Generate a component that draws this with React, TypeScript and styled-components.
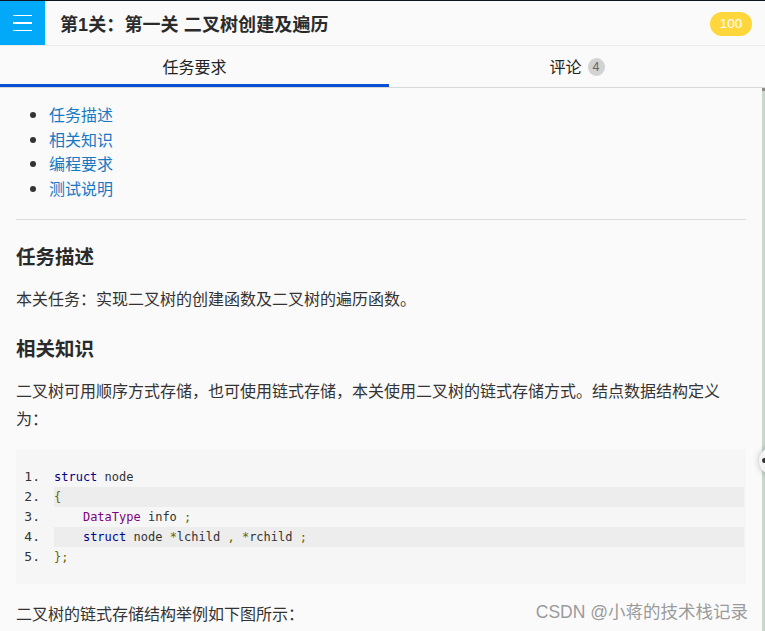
import React from 'react'
import styled, { createGlobalStyle } from 'styled-components'

const GlobalStyle = createGlobalStyle`
  html, body {
    margin: 0;
    padding: 0;
    background: #fafafa;
  }
  body {
    font-family: "Noto Sans CJK SC", "Liberation Sans", sans-serif;
    color: #333;
  }
`

const sans = `"Liberation Sans", "Noto Sans CJK SC", sans-serif`
const mono = `"DejaVu Sans Mono", "Liberation Mono", monospace`

const Page = styled.div`
  position: relative;
  width: 765px;
  height: 631px;
  overflow: hidden;
  border-top: 1px solid #0b1620;
  box-sizing: border-box;
  display: flex;
  flex-direction: column;
`

const Header = styled.header`
  display: flex;
  align-items: center;
  height: 44px;
  border-bottom: 1px solid #ececec;
  background: #fafafa;
  padding-right: 13px;
`

const MenuButton = styled.div`
  width: 45px;
  height: 44px;
  background: #03a9f9;
  display: flex;
  flex-direction: column;
  justify-content: center;
  align-items: center;
  gap: 6px;
  flex-shrink: 0;
`

const MenuLine = styled.span`
  display: block;
  width: 19px;
  height: 1.5px;
  background: #fff;
`

const Title = styled.h1`
  flex: 1;
  margin: 0 0 0 15px;
  font-family: ${sans};
  font-size: 18px;
  font-weight: 700;
  color: #2b2b2b;
  letter-spacing: 0.1px;
`

const Score = styled.span`
  width: 42px;
  height: 24px;
  border-radius: 12px;
  background: #ffd73c;
  color: #fff;
  font-family: ${sans};
  font-size: 13.5px;
  display: flex;
  align-items: center;
  justify-content: center;
  margin-top: 1px;
`

const TabBar = styled.nav`
  display: flex;
  height: 41px;
  border-bottom: 1px solid #d8d8d8;
`

const Tab = styled.div<{ $active?: boolean }>`
  flex: 1;
  display: flex;
  align-items: center;
  justify-content: center;
  gap: 6px;
  font-size: 16px;
  color: #222;
  box-sizing: border-box;
  padding-top: 1px;
  border-bottom: 3px solid ${(p) => (p.$active ? '#0a50d4' : 'transparent')};
  &:last-child {
    flex: 0 0 376px;
  }
`

const CountBadge = styled.span`
  width: 17px;
  height: 18px;
  border-radius: 50%;
  background: #d2d2d2;
  color: #666;
  font-family: ${sans};
  font-size: 12.5px;
  display: flex;
  align-items: center;
  justify-content: center;
  margin-top: 3px;
`

const Body = styled.div`
  flex: 1;
  display: flex;
  min-height: 0;
`

const Article = styled.article`
  flex: 1;
  padding: 14px 16px 0 16px;
  font-size: 16px;
  color: #333;
`

const Edge = styled.div`
  width: 3px;
  background: #c8d8cc;
  border-top: 3px solid #8c8c8c;
`

const Toc = styled.ul`
  margin: 0;
  padding-left: 33px;
  line-height: 24.7px;
  li::marker {
    color: #333;
  }
`

const TocLink = styled.a`
  color: #1878c2;
  text-decoration: none;
`

const Rule = styled.hr`
  border: none;
  border-top: 1px solid #dcdcdc;
  margin: 18px 0 0;
`

const Heading = styled.h3`
  margin: 22px 0 0;
  font-size: 19.5px;
  font-weight: 700;
  line-height: 28px;
  color: #2a2a2a;
`

const Para = styled.p<{ $top?: number }>`
  margin: ${(p) => p.$top ?? 14}px 0 0;
  line-height: 28px;
  color: #333;
`

const CodeBlock = styled.pre`
  margin: 17px 0 0;
  padding: 18px 2px 17px 0;
  background: #f6f6f6;
  font-family: ${mono};
  font-size: 12px;
`

const CodeLine = styled.div`
  display: flex;
  height: 20px;
  line-height: 20px;
`

const LineNo = styled.span`
  width: 38px;
  flex-shrink: 0;
  box-sizing: border-box;
  padding-right: 14px;
  text-align: right;
  color: #333;
  font-size: 13px;
`

const LineCode = styled.code<{ $alt?: boolean }>`
  flex: 1;
  font-family: inherit;
  white-space: pre;
  background: ${(p) => (p.$alt ? '#ededed' : 'transparent')};
`

const Kwd = styled.span`
  color: #000088;
`
const Typ = styled.span`
  color: #7f007f;
`
const Pun = styled.span`
  color: #666600;
`

const Watermark = styled.div`
  position: absolute;
  right: 17px;
  bottom: 8px;
  font-family: ${sans};
  font-size: 17.5px;
  color: #9a9a9a;
  text-shadow: 0 0 1px #fff, 0 0 2px #fff;
`

const Handle = styled.div`
  position: absolute;
  left: 759px;
  top: 446px;
  width: 28px;
  height: 28px;
  border-radius: 50%;
  background: #f4f4f4;
  box-shadow: 0 0 6px rgba(0, 0, 0, 0.25);
  &::after {
    content: '';
    position: absolute;
    left: 3px;
    top: 11px;
    width: 5px;
    height: 5px;
    border-radius: 50%;
    background: #333;
  }
`

const toc = ['任务描述', '相关知识', '编程要求', '测试说明']

const code: React.ReactNode[] = [
  <>
    <Kwd>struct</Kwd> node
  </>,
  <Pun>{'{'}</Pun>,
  <>
    {'    '}
    <Typ>DataType</Typ> info <Pun>;</Pun>
  </>,
  <>
    {'    '}
    <Kwd>struct</Kwd> node <Pun>*</Pun>lchild <Pun>,</Pun> <Pun>*</Pun>rchild <Pun>;</Pun>
  </>,
  <Pun>{'};'}</Pun>,
]

const App = () => {
  return (
    <Page>
      <GlobalStyle />
      <Header>
        <MenuButton>
          <MenuLine />
          <MenuLine />
          <MenuLine />
        </MenuButton>
        <Title>第1关：第一关 二叉树创建及遍历</Title>
        <Score>100</Score>
      </Header>
      <TabBar>
        <Tab $active>任务要求</Tab>
        <Tab>
          评论<CountBadge>4</CountBadge>
        </Tab>
      </TabBar>
      <Body>
        <Article>
          <Toc>
            {toc.map((t) => (
              <li key={t}>
                <TocLink href="#">{t}</TocLink>
              </li>
            ))}
          </Toc>
          <Rule />
          <Heading>任务描述</Heading>
          <Para>本关任务：实现二叉树的创建函数及二叉树的遍历函数。</Para>
          <Heading>相关知识</Heading>
          <Para>
            二叉树可用顺序方式存储，也可使用链式存储，本关使用二叉树的链式存储方式。结点数据结构定义为：
          </Para>
          <CodeBlock>
            {code.map((line, i) => (
              <CodeLine key={i}>
                <LineNo>{i + 1}.</LineNo>
                <LineCode $alt={i % 2 === 1}>{line}</LineCode>
              </CodeLine>
            ))}
          </CodeBlock>
          <Para $top={15}>二叉树的链式存储结构举例如下图所示：</Para>
        </Article>
        <Edge />
      </Body>
      <Handle />
      <Watermark>CSDN @小蒋的技术栈记录</Watermark>
    </Page>
  )
}

export default App
